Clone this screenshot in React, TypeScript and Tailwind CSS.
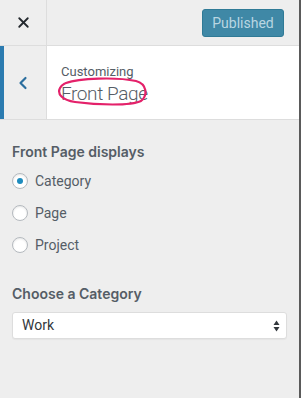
import { X, ChevronLeft } from 'lucide-react';

const options = ['Category', 'Page', 'Project'];

function Radio({ checked, label }: { checked?: boolean; label: string }) {
  return (
    <label className="flex h-[32px] items-center gap-[7px]">
      <span className="flex h-[16px] w-[16px] items-center justify-center rounded-full border border-[#b4b9be] bg-white shadow-[inset_0_1px_2px_rgba(0,0,0,0.1)]">
        {checked && <span className="h-[6px] w-[6px] rounded-full bg-[#1e8cbe]" />}
      </span>
      <span className="text-[14px] text-[#555d66]">{label}</span>
    </label>
  );
}

export default function App() {
  return (
    <div className="flex h-[398px] w-[301px] flex-col border-r-2 border-[#5a5a5a] bg-[#eeeeee] font-['Roboto',sans-serif] text-[#555d66]">
      {/* Top bar */}
      <div className="flex h-[46px] shrink-0 items-center border-b border-[#dddddd]">
        <button className="flex h-full w-[47px] items-center justify-center border-r border-[#dddddd] text-[#23282d]">
          <X size={17} strokeWidth={2.6} />
        </button>
        <div className="flex flex-1 justify-end pr-[15px]">
          <button className="mt-[1px] h-[28px] w-[82px] rounded-[3px] border border-[#2f7a96] bg-[#3f88a6] text-[14px] text-[#b9d6e2]">
            Published
          </button>
        </div>
      </div>

      {/* Section header */}
      <div className="flex h-[74px] shrink-0 border-b border-[#dddddd]">
        <button className="flex w-[47px] items-center justify-center border-l-4 border-r border-l-[#2b7bb0] border-r-[#dddddd] bg-[#eeeeee] pr-[4px] text-[#2b6e9e]">
          <ChevronLeft size={20} strokeWidth={2.6} />
        </button>
        <div className="relative flex flex-1 flex-col justify-center bg-white pl-[14px] pt-[4px]">
          <span className="text-[13px] leading-[18px] text-[#555d66]">Customizing</span>
          <span className="text-[19px] font-light leading-[26px] tracking-[-0.4px] text-[#555d66]">Front Page</span>
          <svg className="absolute left-[10px] top-[31px]" width="92" height="30" viewBox="0 0 92 30" fill="none">
            <path
              d="M9 6 C 22 1, 60 0, 79 4 C 90 7, 91 18, 84 24 C 74 29, 40 28, 18 25 C 5 23, 0 17, 3 11 C 5 7, 10 5, 16 4"
              stroke="#e4216a"
              strokeWidth="2.2"
              strokeLinecap="round"
            />
          </svg>
        </div>
      </div>

      {/* Controls */}
      <div className="flex flex-col px-[12px] pt-[22px]">
        <h3 className="mb-[3px] font-['Inter',sans-serif] text-[14px] font-semibold leading-[20px] text-[#555d66]">Front Page displays</h3>
        {options.map((o, i) => (
          <Radio key={o} label={o} checked={i === 0} />
        ))}

        <h3 className="mt-[23px] font-['Inter',sans-serif] text-[14px] font-semibold leading-[20px] text-[#555d66]">Choose a Category</h3>
        <div className="mt-[8px] flex h-[27px] items-center justify-between rounded-[3px] border border-[#dddddd] bg-white pl-[9px] pr-[6px] shadow-[0_1px_1px_rgba(0,0,0,0.04)]">
          <span className="text-[14px] text-[#32373c]">Work</span>
          <svg width="7" height="12" viewBox="0 0 7 12">
            <path d="M3.5 0.5 L6.5 5 L0.5 5 Z" fill="#32373c" />
            <path d="M0.5 7 L6.5 7 L3.5 11.5 Z" fill="#32373c" />
          </svg>
        </div>
      </div>
    </div>
  );
}
